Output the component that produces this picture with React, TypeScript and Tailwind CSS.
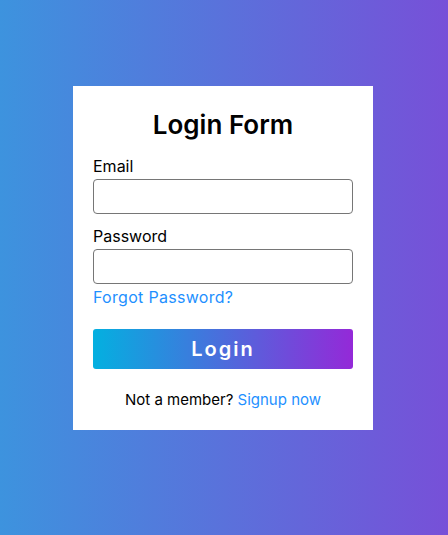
export default function App() {
  return (
    <div className="flex h-[535px] w-full items-start justify-center bg-linear-to-r/srgb from-[#3d93de] to-[#7750d8] pt-[86px] font-['Inter',sans-serif]">
      <div className="mr-[2px] w-[300px] bg-white px-5 pt-[22px] pb-[19px]">
        <h1 className="text-center text-[26px] font-semibold leading-[34px] text-black">Login Form</h1>
        <form className="mt-[12px]" onSubmit={(e) => e.preventDefault()}>
          <label className="block text-[16px] leading-[24px] text-black">Email</label>
          <input type="email" className="mt-[1px] block h-[35px] w-full rounded-[4px] border border-[#767676] px-2 outline-none" />
          <label className="mt-[10px] block text-[16px] leading-[24px] text-black">Password</label>
          <input type="password" className="mt-[1px] block h-[35px] w-full rounded-[4px] border border-[#767676] px-2 outline-none" />
          <a href="#" className="mt-[1px] block text-[16px] leading-[24px] tracking-[0.3px] text-[#1e90ff]">Forgot Password?</a>
          <button type="submit" className="mt-[20px] h-[40px] w-full rounded-[3px] bg-linear-to-r/srgb from-[#03b0e0] to-[#9429d8] text-[20px] font-semibold tracking-[2px] text-white">
            Login
          </button>
          <p className="mt-[20px] text-center text-[15px] leading-[22px] text-black">
            Not a member? <a href="#" className="text-[#1e90ff]">Signup now</a>
          </p>
        </form>
      </div>
    </div>
  );
}
